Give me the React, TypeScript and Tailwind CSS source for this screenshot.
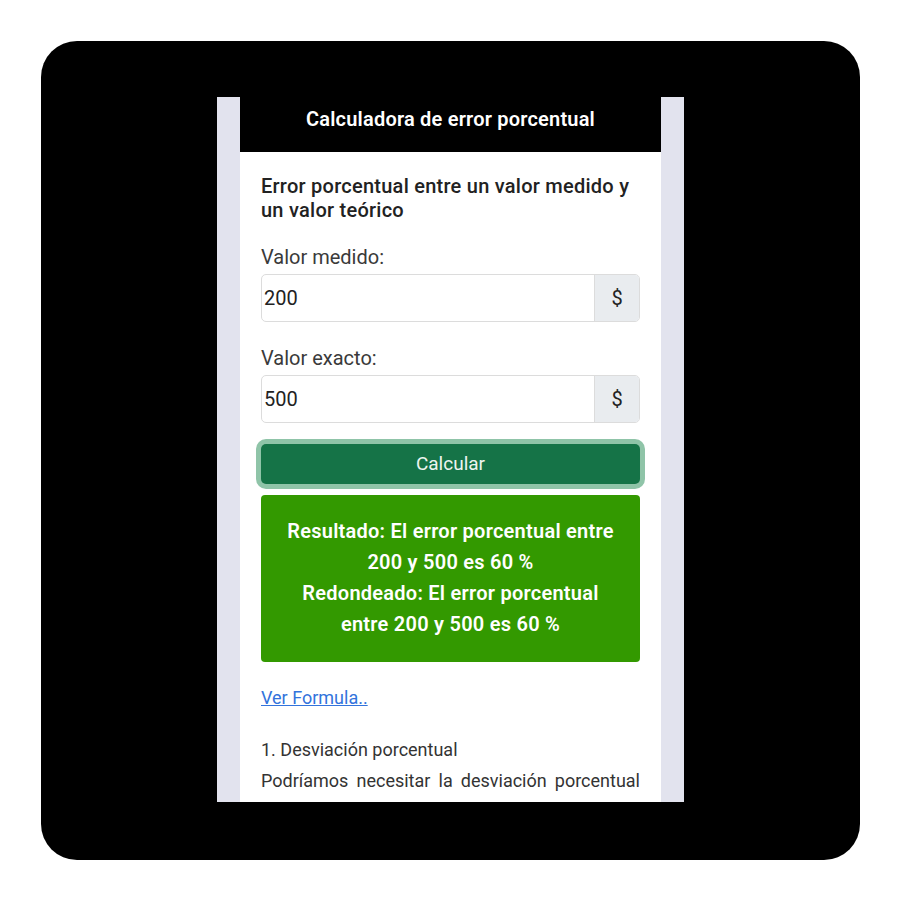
import React from "react";

export default function App() {
  return (
    <div className="w-[900px] h-[900px] bg-white p-[41px] font-['Roboto',sans-serif]">
      {/* Frame */}
      <div className="w-[819px] h-[819px] bg-black rounded-[36px] flex justify-center pt-[56px]">
        {/* Phone screen */}
        <div className="w-[467px] h-[705px] flex bg-[#e2e3ee] overflow-hidden">
          <div className="w-[23px] shrink-0" />
          <div className="w-[421px] bg-white flex flex-col">
            {/* Header */}
            <div className="h-[55px] shrink-0 bg-black flex items-center justify-center pb-[12px]">
              <span className="text-white text-[20px] tracking-[0.2px] font-semibold">Calculadora de error porcentual</span>
            </div>

            <div className="px-[21px] pt-[22px]">
              <h2 className="text-[20px] leading-[24px] tracking-[0.25px] font-medium text-[#222]">
                Error porcentual entre un valor medido y un valor teórico
              </h2>

              {/* Inputs */}
              <label className="block mt-[23px] text-[20px] leading-[24px] text-[#3a3a3a]">Valor medido:</label>
              <div className="mt-[5px] flex h-[48px] border border-[#dcdcdc] rounded-[5px] overflow-hidden">
                <div className="flex-1 flex items-center pl-[2px] text-[20px] text-[#222]">200</div>
                <div className="w-[45px] bg-[#e9ecef] border-l border-[#dcdcdc] flex items-center justify-center text-[20px] text-[#222]">
                  $
                </div>
              </div>

              <label className="block mt-[24px] text-[20px] leading-[24px] text-[#3a3a3a]">Valor exacto:</label>
              <div className="mt-[5px] flex h-[48px] border border-[#dcdcdc] rounded-[5px] overflow-hidden">
                <div className="flex-1 flex items-center pl-[2px] text-[20px] text-[#222]">500</div>
                <div className="w-[45px] bg-[#e9ecef] border-l border-[#dcdcdc] flex items-center justify-center text-[20px] text-[#222]">
                  $
                </div>
              </div>

              {/* Button */}
              <button className="mt-[21px] w-full h-[40px] rounded-[5px] bg-[#157347] text-[#eef5f0] text-[19px] ring-[5px] ring-[#8fc4a8] flex items-center justify-center">
                Calcular
              </button>

              {/* Result */}
              <div className="mt-[11px] h-[167px] rounded-[4px] bg-[#339900] text-white text-[20px] leading-[31px] tracking-[0.25px] font-semibold text-center px-[20px] pt-[21px]">
                <p>Resultado: El error porcentual entre 200 y 500 es 60 %</p>
                <p>Redondeado: El error porcentual entre 200 y 500 es 60 %</p>
              </div>

              <a className="block mt-[24px] text-[18px] leading-[24px] text-[#3273dc] underline">Ver Formula..</a>

              <p className="mt-[28px] text-[18px] leading-[24px] text-[#333]">1. Desviación porcentual</p>
              <p className="mt-[7px] text-[18px] leading-[24px] text-[#333] text-justify [text-align-last:justify] whitespace-nowrap">
                Podríamos necesitar la desviación porcentual
              </p>
            </div>
          </div>
          <div className="w-[23px] shrink-0" />
        </div>
      </div>
    </div>
  );
}
